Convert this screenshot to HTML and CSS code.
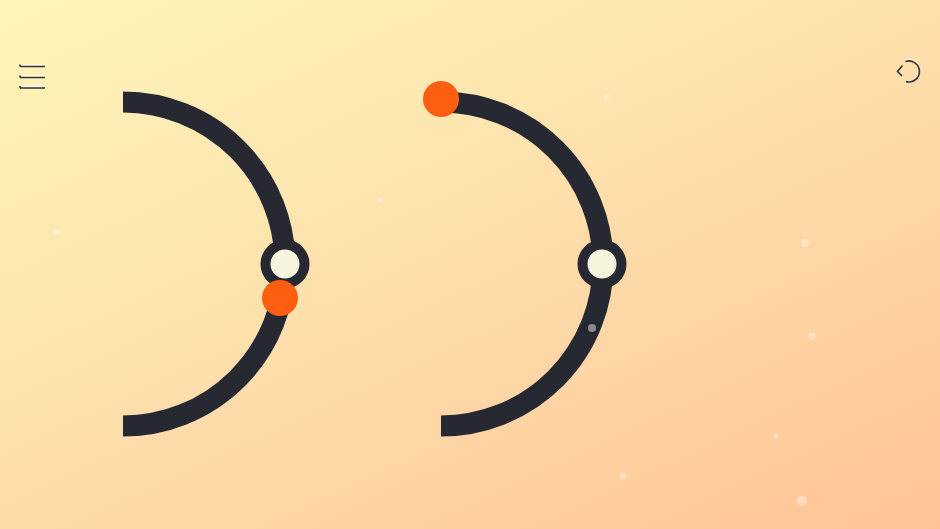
FILE: index.html
```html
<!DOCTYPE html>
<html>
<head>
<meta charset="utf-8">
<link rel="stylesheet" href="styles.css">
</head>
<body>
<div class="stage">
  <svg class="board" width="940" height="529" viewBox="0 0 940 529">
    <g class="motes">
      <circle cx="607" cy="97" r="3"/>
      <circle cx="380" cy="200" r="2.5"/>
      <circle cx="58" cy="232" r="3"/>
      <circle cx="805" cy="243" r="4"/>
      <circle cx="812" cy="336" r="3.5"/>
      <circle cx="776" cy="436" r="2.5"/>
      <circle cx="623" cy="476" r="3.5"/>
      <circle cx="802" cy="501" r="5"/>
    </g>
    <path class="arc" d="M123 102 A162 162 0 0 1 123 426"/>
    <path class="arc" d="M441 102 A162 162 0 0 1 441 426"/>
    <circle class="node" cx="285" cy="264" r="19.5"/>
    <circle class="node" cx="602" cy="264" r="19.5"/>
    <circle class="ball" cx="280" cy="298" r="18"/>
    <circle class="ball" cx="441" cy="99" r="18"/>
    <circle class="ghost" cx="592" cy="328" r="4"/>
  </svg>
  <div class="toolbar">
    <button class="icon-btn menu" aria-label="Menu">
      <svg width="30" height="30" viewBox="0 0 30 30">
        <g class="hl"><path d="M3 5H28M3 16H28M3 26.5H28"/></g>
        <g class="ln"><path d="M3 6.5H28M3 17.5H28M3 28H28M3 4.5V6.5M3 15.5V17.5M3 26V28"/></g>
      </svg>
    </button>
    <button class="icon-btn undo" aria-label="Restart">
      <svg width="30" height="30" viewBox="0 0 30 30">
        <path class="hl" d="M9.5 1.5 A10.5 10.5 0 1 1 10 21.5"/>
        <path class="ln" d="M9.5 2.5 A10.5 10.5 0 1 1 10 22.5"/>
        <path class="ln" d="M6.5 6.5 L1.5 12.5 L6 17"/>
      </svg>
    </button>
  </div>
</div>
</body>
</html>
```
FILE: styles.css
```css
html, body {
  margin: 0;
  padding: 0;
  width: 940px;
  height: 529px;
  overflow: hidden;
  font-family: "Liberation Sans", Arial, sans-serif;
}
.stage {
  position: relative;
  width: 940px;
  height: 529px;
  background: linear-gradient(155deg, #fdf5b9 0%, #fde6b0 35%, #fed3a3 70%, #ffc396 100%);
}
.board {
  display: block;
}
.arc {
  fill: none;
  stroke: #272932;
  stroke-width: 21;
}
.node {
  fill: #f6f4dc;
  stroke: #272932;
  stroke-width: 10;
}
.ball {
  fill: #fd5e11;
}
.ghost {
  fill: #8d8c92;
}
.motes circle {
  fill: #ffffff;
  opacity: 0.35;
}
.toolbar {
  position: absolute;
  top: 59px;
  left: 17px;
  right: 14px;
  display: flex;
  justify-content: space-between;
  align-items: flex-start;
}
.icon-btn {
  border: 0;
  background: none;
  padding: 0;
  margin: 0;
  width: 30px;
  height: 30px;
  cursor: pointer;
}
.menu {
  margin-top: 1px;
}
.icon-btn svg {
  display: block;
}
.hl {
  fill: none;
  stroke: #ffffff;
  stroke-width: 1.5;
  opacity: 0.85;
}
.ln {
  fill: none;
  stroke: #333333;
  stroke-width: 1.6;
}
```
